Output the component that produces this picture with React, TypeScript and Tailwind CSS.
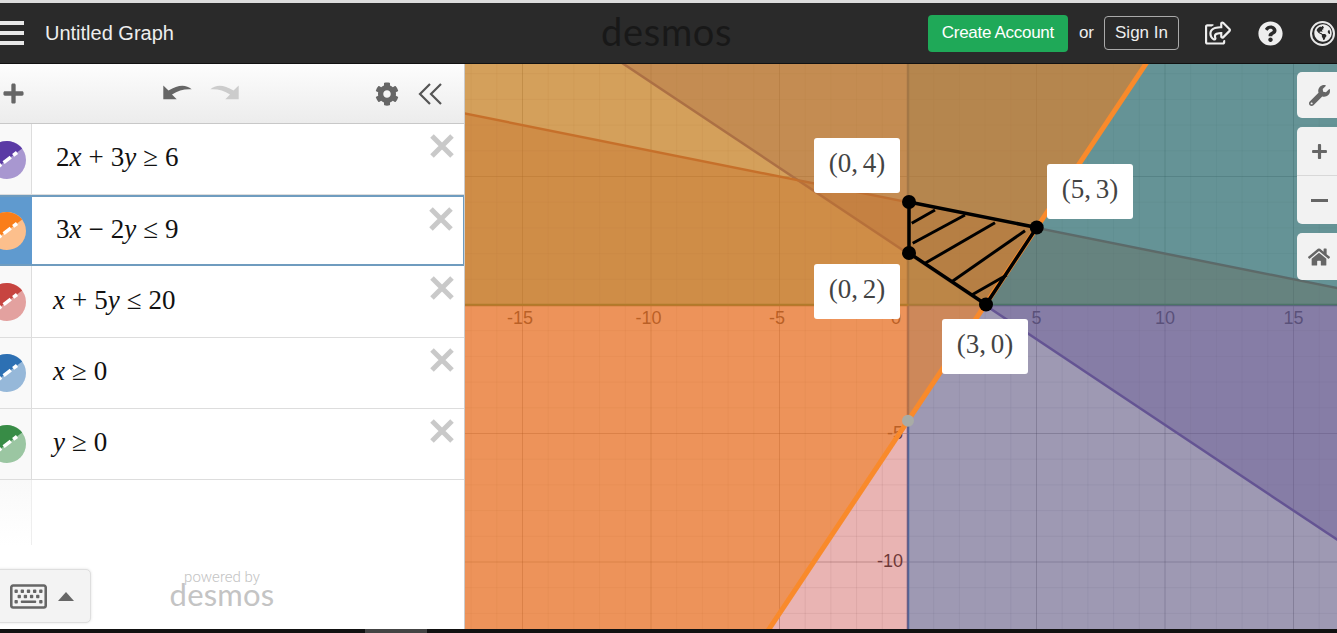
import type { ReactNode } from "react"
import { FaCog, FaGlobeAmericas, FaHome, FaPlus, FaQuestionCircle, FaRegKeyboard, FaRegShareSquare, FaWrench } from "react-icons/fa"

const UNIT = 25.7
const px = (x: number) => 443 + UNIT * x
const py = (y: number) => 241 - UNIT * y

const pts = (list: number[][]) => list.map(([x, y]) => `${px(x)},${py(y)}`).join(" ")

const REGIONS = [
  { color: "#6042a6", opacity: 0.4, points: [[-60, 42], [60, -38], [60, 60], [-60, 60]] },
  { color: "#c74440", opacity: 0.4, points: [[-60, 16], [60, -8], [60, -60], [-60, -60]] },
  { color: "#2d70b3", opacity: 0.4, points: [[0, -60], [60, -60], [60, 60], [0, 60]] },
  { color: "#388c46", opacity: 0.4, points: [[-60, 0], [60, 0], [60, 60], [-60, 60]] },
  // orange sits on top and reads stronger than the others
  { color: "#f07c1a", opacity: 0.58, points: [[30, 40.5], [-60, 40.5], [-60, -49.5], [-30, -49.5]] },
]

const HATCH = [
  [911.7, 223.3, 935, 210],
  [912.7, 243.3, 965, 215],
  [925, 263.3, 995, 222.7],
  [951.7, 281.7, 1025, 230.7],
  [971.7, 295, 1006.7, 275],
]

const XTICKS = [-15, -10, -5, 5, 10, 15]

function Graph() {
  const minor: number[] = []
  for (let i = -18; i <= 18; i++) minor.push(i)
  const minorY: number[] = []
  for (let i = -13; i <= 10; i++) minorY.push(i)

  return (
    <svg width="872" height="565" viewBox="0 0 872 565" className="block">
      <rect width="872" height="565" fill="#ffffff" />
      {minor.map((i) => (
        <line key={i} x1={px(i)} x2={px(i)} y1={0} y2={565} stroke="#000" strokeOpacity={i % 5 === 0 ? 0.28 : 0.08} />
      ))}
      {minorY.map((i) => (
        <line key={i} y1={py(i)} y2={py(i)} x1={0} x2={872} stroke="#000" strokeOpacity={i % 5 === 0 ? 0.28 : 0.08} />
      ))}

      <g className="font-['Liberation_Sans',sans-serif]" fontSize="18" fill="#333">
        {XTICKS.map((t) => (
          <text key={t} x={px(t) - (t < 0 ? 2.5 : 0)} y={260} textAnchor="middle">
            {t}
          </text>
        ))}
        <text x={431} y={260} textAnchor="middle">0</text>
        <text x={438} y={375} textAnchor="end">-5</text>
        <text x={438} y={503} textAnchor="end">-10</text>
      </g>

      {/* boundary lines sit under the fills, except the orange one */}
      <line x1={px(-60)} y1={py(42)} x2={px(60)} y2={py(-38)} stroke="#6042a6" strokeWidth="2.5" />
      <line x1={px(-60)} y1={py(16)} x2={px(60)} y2={py(-8)} stroke="#c74440" strokeWidth="2.5" />
      <line x1={px(0)} y1={0} x2={px(0)} y2={565} stroke="#2d70b3" strokeWidth="2.5" />
      <line x1={0} y1={py(0)} x2={872} y2={py(0)} stroke="#388c46" strokeWidth="2.5" />

      {REGIONS.map((r) => (
        <polygon key={r.color} points={pts(r.points)} fill={r.color} fillOpacity={r.opacity} />
      ))}

      <line x1={px(-30)} y1={py(-49.5)} x2={px(30)} y2={py(40.5)} stroke="#f98a2b" strokeWidth="5" />
      <circle cx={px(0)} cy={py(-4.5)} r="6" fill="#a9aca6" />

      <g transform="translate(-465 -64)" stroke="#000" strokeWidth="3">
        <polygon points="909,202 1036.7,227.5 986,304.5 909,253" fill="none" strokeWidth="3.5" />
        {HATCH.map(([a, b, c, d]) => (
          <line key={a} x1={a} y1={b} x2={c} y2={d} />
        ))}
        <g fill="#000" stroke="none">
          <circle cx="909" cy="202" r="7" />
          <circle cx="909" cy="253" r="7" />
          <circle cx="1036.7" cy="227.5" r="7" />
          <circle cx="986" cy="304.5" r="7" />
        </g>
      </g>
    </svg>
  )
}

function Coord({ text, className }: { text: string; className: string }) {
  return (
    <div
      className={`absolute w-[86px] h-[55px] bg-white rounded-[3px] flex items-center justify-center pb-[5px] text-[27px] [word-spacing:-2px] text-[#444444] font-['Liberation_Serif',serif] ${className}`}
    >
      {text}
    </div>
  )
}

function Swatch({ dark, light, active }: { dark: string; light: string; active?: boolean }) {
  return (
    <div className={`w-[32px] h-full shrink-0 flex items-center border-r ${active ? "bg-[#5f9acf] border-[#5f9acf]" : "bg-[#f9f9f9] border-[#dddddd]"}`}>
      <svg width="31" height="40" viewBox="0 0 31 40" className="mt-[1px]">
        <circle cx="7" cy="20" r="19" fill={light} />
        <path d="M-8.2 31.4 A19 19 0 0 1 22.2 8.6 Z" fill={dark} />
        <line x1="-6" y1="29.8" x2="17" y2="12.5" stroke="#fff" strokeWidth="3.5" strokeDasharray="9 3" />
      </svg>
    </div>
  )
}

function Row({ dark, light, active, pad, children }: { dark: string; light: string; active?: boolean; pad: string; children: ReactNode }) {
  return (
    <div className={`h-[71.2px] flex relative ${active ? "border-y-2 border-r border-[#6f9cbf]" : "border-b border-[#dddddd]"}`}>
      <Swatch dark={dark} light={light} active={active} />
      <div className={`flex-1 flex items-center pb-[3px] text-[27px] text-[#111] font-['Liberation_Serif',serif] ${pad}`}>{children}</div>
      <svg width="26" height="26" viewBox="0 0 26 26" className="absolute right-[9px] top-[9px]">
        <path d="M3 3 L23 23 M23 3 L3 23" stroke="#c9c9c9" strokeWidth="5" />
      </svg>
    </div>
  )
}

function Op({ children }: { children: ReactNode }) {
  return <span className="mx-[7px]">{children}</span>
}

function Undo({ className }: { className: string }) {
  return (
    <svg width="29" height="17" viewBox="0 0 29 17" className={className}>
      <path d="M0.3 2.5 L0.3 16.3 L13.7 16.3 L9 11.5 Q18 5.5 28.7 6.3 Q20 -1.5 5.5 7.5 Z" />
    </svg>
  )
}

function Sidebar() {
  return (
    <div className="w-[465px] shrink-0 relative bg-white border-r border-[#cccccc] flex flex-col">
      <div className="h-[60px] shrink-0 flex items-center bg-gradient-to-b from-[#fdfdfd] to-[#ececec] border-b border-[#c8c8c8] text-[#666666]">
        <FaPlus className="ml-[2px] text-[23px]" />
        <div className="ml-[138px] flex items-center gap-[18px] -mt-[4px]">
          <Undo className="fill-[#666666]" />
          <Undo className="fill-[#cccccc] -scale-x-100" />
        </div>
        <FaCog className="ml-[136px] text-[24px]" />
        <svg width="26" height="26" viewBox="0 0 26 26" className="ml-[19px] fill-none stroke-[#555555]" strokeWidth="2.2">
          <path d="M12 3 L2 13 L12 23 M23 3 L13 13 L23 23" />
        </svg>
      </div>
      <Row dark="#5b3aa5" light="#a897d0" pad="pl-[24px]">
        2<i>x</i>
        <Op>+</Op>3<i>y</i>
        <Op>≥</Op>6
      </Row>
      <Row dark="#fa7e19" light="#fcbf8c" active pad="pl-[24px]">
        3<i>x</i>
        <Op>−</Op>2<i>y</i>
        <Op>≤</Op>9
      </Row>
      <Row dark="#c74440" light="#e3a19f" pad="pl-[21px]">
        <i>x</i>
        <Op>+</Op>5<i>y</i>
        <Op>≤</Op>20
      </Row>
      <Row dark="#2d70b3" light="#96b8d9" pad="pl-[21px]">
        <i>x</i>
        <Op>≥</Op>0
      </Row>
      <Row dark="#388c46" light="#9bc6a2" pad="pl-[21px]">
        <i>y</i>
        <Op>≥</Op>0
      </Row>
      <div className="w-[32px] h-[65px] bg-gradient-to-b from-[#f9f9f9] to-white border-r border-[#eeeeee]" />

      <div className="absolute left-[-6px] bottom-[6px] w-[97px] h-[54px] bg-[#f3f3f3] border border-[#dedede] rounded-[5px] shadow-[0_0_3px_rgba(0,0,0,0.12)] flex items-center pl-[15px] text-[#666666]">
        <FaRegKeyboard className="text-[37px]" />
        <div className="ml-[11px] w-0 h-0 border-x-[8px] border-x-transparent border-b-[9px] border-b-[#666666]" />
      </div>
      <div className="absolute left-[171px] bottom-[25px] w-[102px] flex flex-col items-center text-[#c4c4c4]">
        <span className="text-[15px] leading-[14px] font-['Roboto',sans-serif] font-light">powered by</span>
        <span className="text-[31px] leading-[20px] tracking-[0.2px] font-['Lato',sans-serif]">desmos</span>
      </div>
    </div>
  )
}

function ToolButton({ className, children }: { className: string; children: ReactNode }) {
  return (
    <div className={`absolute left-[832px] w-[50px] bg-[#f2f2f2] rounded-l-[5px] flex flex-col text-[#666666] ${className}`}>{children}</div>
  )
}

export default function App() {
  return (
    <div className="w-[1337px] h-[633px] overflow-hidden flex flex-col bg-[#111111] font-['Liberation_Sans',sans-serif]">
      <div className="h-[3px] shrink-0 bg-[#dcdcdc]" />
      <header className="h-[61px] shrink-0 bg-[#2a2a2a] border-b border-[#111111] flex items-center relative text-[#eeeeee]">
        <div className="w-[24px] flex flex-col gap-[6px]">
          <div className="h-[4px] bg-[#e8e8e8]" />
          <div className="h-[4px] bg-[#e8e8e8]" />
          <div className="h-[4px] bg-[#e8e8e8]" />
        </div>
        <span className="ml-[21px] text-[20px]">Untitled Graph</span>
        <span className="absolute left-[601px] top-[5px] text-[38px] leading-[46px] tracking-[0.7px] text-[#181818] font-['Lato',sans-serif]">desmos</span>
        <div className="ml-auto flex items-center">
          <button className="w-[140px] h-[37px] bg-[#1fa958] rounded-[4px] text-[17px] tracking-[-0.3px] text-white">Create Account</button>
          <span className="ml-[11px] text-[17px]">or</span>
          <button className="ml-[10px] w-[75px] h-[34px] border border-[#aaaaaa] rounded-[4px] text-[17px]">Sign In</button>
          <FaRegShareSquare className="ml-[26px] text-[26px]" />
          <FaQuestionCircle className="ml-[27px] text-[25px]" />
          <div className="ml-[27px] mr-[2px] w-[25px] h-[25px] rounded-full border-2 border-[#e8e8e8] flex items-center justify-center">
            <FaGlobeAmericas className="text-[18px]" />
          </div>
        </div>
      </header>
      <main className="h-[565px] shrink-0 flex">
        <Sidebar />
        <div className="relative flex-1 overflow-hidden">
          <Graph />
          <Coord text="(0, 4)" className="left-[349px] top-[74px]" />
          <Coord text="(5, 3)" className="left-[582px] top-[100px]" />
          <Coord text="(0, 2)" className="left-[349px] top-[200px]" />
          <Coord text="(3, 0)" className="left-[477px] top-[255px]" />
          <ToolButton className="top-[8px] h-[46px] justify-center pl-[12px]">
            <FaWrench className="text-[21px]" />
          </ToolButton>
          <ToolButton className="top-[63px] h-[97px]">
            <div className="h-[49px] flex items-center pl-[14px] border-b border-[#d8d8d8]">
              <FaPlus className="text-[17px]" />
            </div>
            <div className="h-[48px] flex items-center pl-[14px]">
              <div className="w-[17px] h-[3px] bg-[#666666]" />
            </div>
          </ToolButton>
          <ToolButton className="top-[169px] h-[47px] justify-center pl-[11px]">
            <FaHome className="text-[22px]" />
          </ToolButton>
        </div>
      </main>
      <div className="flex-1 flex">
        <div className="ml-[365px] w-[62px] bg-[#444444]" />
      </div>
    </div>
  )
}
